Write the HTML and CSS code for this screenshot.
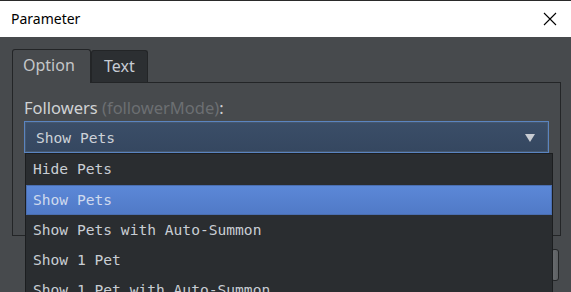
FILE: index.html
```html
<!DOCTYPE html>
<html lang="en">
<head>
    <meta charset="UTF-8">
    <title>Parameter</title>
    <link rel="stylesheet" href="styles.css">
</head>
<body>
    <div class="titlebar">
        <span class="title">Parameter</span>
        <svg class="close" width="14" height="14" viewBox="0 0 14 14">
            <path d="M1 1 L13 13 M13 1 L1 13" stroke="#000" stroke-width="1.1" fill="none"/>
        </svg>
    </div>

    <div class="content">
        <div class="tabs">
            <div class="tab active">Option</div>
            <div class="tab">Text</div>
        </div>
        <div class="panel">
            <div class="label">Followers <span class="key">(followerMode)</span>:</div>
            <div class="select-wrap">
                <div class="select">
                    <span>Show Pets</span>
                    <span class="arrow"></span>
                </div>
                <ul class="dropdown">
                    <li>Hide Pets</li>
                    <li class="selected">Show Pets</li>
                    <li>Show Pets with Auto-Summon</li>
                    <li>Show 1 Pet</li>
                    <li>Show 1 Pet with Auto-Summon</li>
                </ul>
            </div>
        </div>
        <div class="side-btn"></div>
    </div>
</body>
</html>
```

FILE: styles.css
```css
html, body {
    margin: 0;
    height: 100%;
    overflow: hidden;
}
body {
    background: #474a4d;
    font-family: "Noto Sans", "Open Sans", sans-serif;
}
.titlebar {
    height: 36px;
    border-top: 1px solid #2a2a2a;
    background: #fff;
    display: flex;
    align-items: center;
    justify-content: space-between;
    padding: 0 14px 0 11px;
}
.title {
    font-size: 14px;
    color: #000;
    margin-top: -1px;
}
.close {
    margin-top: -1px;
}
.content {
    position: relative;
    padding: 12px 10px 0 12px;
}
.tabs {
    display: flex;
    align-items: flex-end;
    height: 33px;
}
.tab {
    height: 31px;
    padding: 0 11px 0 10px;
    border: 1px solid #232527;
    border-bottom: none;
    border-radius: 3px 3px 0 0;
    background: #2c2f32;
    color: #c6ccd4;
    font-size: 16px;
    line-height: 31px;
    margin-right: -1px;
}
.tab.active {
    height: 32px;
    background: #474a4d;
    color: #c4c6c8;
    width: 56px;
    position: relative;
    z-index: 1;
    margin-bottom: -1px;
    padding-bottom: 1px;
}
.tab:not(.active) {
    padding: 0 12px;
    margin-left: 1px;
}
.panel {
    border: 1px solid #232527;
    height: 152px;
    padding: 0 11px;
}
.label {
    color: #d0d2d4;
    font-size: 16.5px;
    margin-top: 13px;
    height: 25px;
}
.key {
    color: #6c6f72;
}
.select-wrap {
    position: relative;
}
.select {
    height: 30px;
    border: 1px solid #5a84c0;
    box-shadow: inset 0 0 0 1px #46586f;
    background: linear-gradient(#3b4e68, #354760);
    display: flex;
    align-items: center;
    justify-content: space-between;
    padding: 0 13px 0 11px;
    color: #cdd2d8;
    font-family: "DejaVu Sans Mono", monospace;
    font-size: 14.6px;
}
.arrow {
    width: 0;
    height: 0;
    border-left: 5px solid transparent;
    border-right: 5px solid transparent;
    border-top: 8px solid #c8ccd2;
    margin-top: 1px;
}
.dropdown {
    position: absolute;
    left: 1px;
    right: -4px;
    top: 32px;
    margin: 0;
    padding: 0;
    list-style: none;
    background: #2a2d30;
    border: 1px solid #1c1e20;
    z-index: 2;
}
.dropdown li {
    height: 30px;
    line-height: 30px;
    padding-left: 7px;
    color: #c9ced4;
    font-family: "DejaVu Sans Mono", monospace;
    font-size: 14.6px;
}
.dropdown li:first-child {
    height: 31px;
}
.dropdown li.selected {
    background: linear-gradient(#5c88d8, #5079c6);
    box-shadow: inset 0 0 0 1px #4a6eb0;
    color: #cfdaee;
}
.side-btn {
    position: absolute;
    right: 12px;
    top: 212px;
    width: 6px;
    height: 30px;
    border: 1px solid #232527;
    border-radius: 3px;
    background: linear-gradient(90deg, #6a6d70, #5c5f62);
}
```
